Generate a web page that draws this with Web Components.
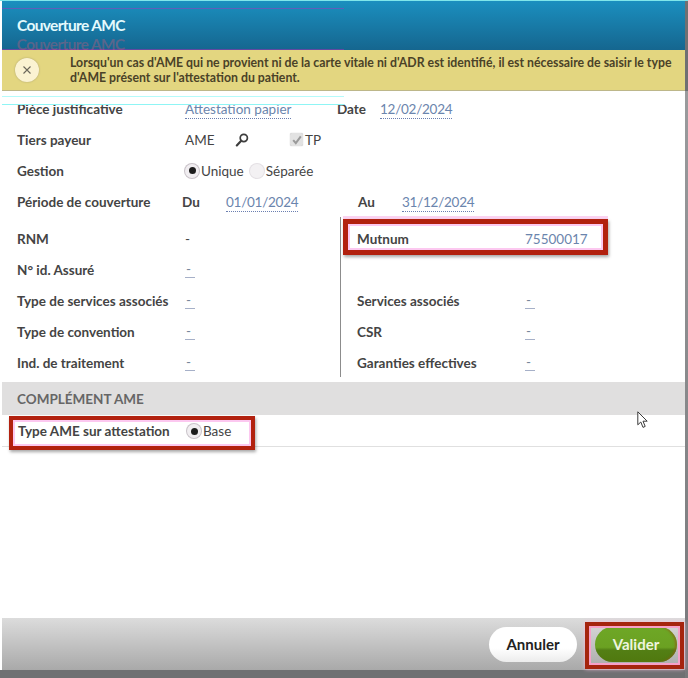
<!DOCTYPE html>
<html lang="fr">
<head>
<meta charset="utf-8">
<title>Couverture AMC</title>
<style>
  html, body { margin: 0; padding: 0; background: #fff; }
  body { font-family: Lato, "Liberation Sans", sans-serif; color: #3c3c3c; }
</style>
</head>
<body>
<cov-dialog>
  <cov-header slot="header">Couverture AMC</cov-header>
  <cov-notice slot="notice">Lorsqu'un cas d'AME qui ne provient ni de la carte vitale ni d'ADR est identifié, il est nécessaire de saisir le type d'AME présent sur l'attestation du patient.</cov-notice>

  <cov-row label="Pièce justificative">
    <cov-link style="width:152px">Attestation papier</cov-link>
    <cov-label style="width:43px">Date</cov-label>
    <cov-link date>12/02/2024</cov-link>
  </cov-row>
  <cov-row label="Tiers payeur">
    <cov-value style="width:50px">AME</cov-value>
    <cov-icon style="width:55px"></cov-icon>
    <cov-check>TP</cov-check>
  </cov-row>
  <cov-row label="Gestion">
    <cov-radio checked>Unique</cov-radio>
    <cov-radio>Séparée</cov-radio>
  </cov-row>
  <cov-row label="Période de couverture" tight>
    <cov-label style="width:44px">Du</cov-label>
    <cov-link date style="width:132px">01/01/2024</cov-link>
    <cov-label style="width:44px">Au</cov-label>
    <cov-link date>31/12/2024</cov-link>
  </cov-row>

  <cov-columns>
    <div slot="left">
      <cov-row label="RNM"><cov-value>-</cov-value></cov-row>
      <cov-row label="N° id. Assuré"><cov-link dash>-</cov-link></cov-row>
      <cov-row label="Type de services associés"><cov-link dash>-</cov-link></cov-row>
      <cov-row label="Type de convention"><cov-link dash>-</cov-link></cov-row>
      <cov-row label="Ind. de traitement"><cov-link dash>-</cov-link></cov-row>
    </div>
    <div slot="right">
      <cov-row label="Mutnum" side marked><cov-link>75500017</cov-link></cov-row>
      <cov-row side></cov-row>
      <cov-row label="Services associés" side><cov-link dash>-</cov-link></cov-row>
      <cov-row label="CSR" side><cov-link dash>-</cov-link></cov-row>
      <cov-row label="Garanties effectives" side><cov-link dash>-</cov-link></cov-row>
    </div>
  </cov-columns>

  <cov-section>COMPLÉMENT AME</cov-section>
  <cov-complement><cov-radio checked>Base</cov-radio></cov-complement>

  <cov-footer slot="footer"></cov-footer>
  <cov-ghost slot="overlay"></cov-ghost>
</cov-dialog>

<script>
const fontStack = 'Lato, "Liberation Sans", sans-serif';

// small helper so every element gets its shadow root the same way
class CovBase extends HTMLElement {
  constructor() {
    super();
    this.attachShadow({mode: 'open'});
    this.shadowRoot.innerHTML = this.render();
  }
  render() { return '<slot></slot>'; }
}

class CovDialog extends CovBase {
  render() {
    return `
      <style>
        :host {
          display: flex;
          flex-direction: column;
          box-sizing: border-box;
          width: 688px;
          height: 678px;
          padding: 1px 3px 8px 2px;
          background: linear-gradient(#fff, #fff) 0 0 / 685px 670px no-repeat,
                      #6f7072;
          position: relative;
          overflow: hidden;
          font-family: ${fontStack};
        }
        .content { flex: 1; display: flex; flex-direction: column; min-height: 0; }
        .edge {
          position: absolute; top: 0; left: 0; right: 0; height: 1px; background: #7fe6ea;
        }
        .side {
          position: absolute; top: 91px; right: 0; bottom: 0; width: 3px;
          background: linear-gradient(#9a9b9d, #77787a);
        }
        .cursor { position: absolute; left: 637px; top: 411px; }
      </style>
      <div class="edge"></div>
      <div class="side"></div>
      <slot name="header"></slot>
      <slot name="notice"></slot>
      <div class="content"><slot></slot></div>
      <slot name="footer"></slot>
      <slot name="overlay"></slot>
      <svg class="cursor" width="12" height="18" viewBox="0 0 12 18">
        <path d="M.8.8v13l3-2.8 2.2 5.4 2.2-1-2.2-5.2h4.2z" fill="#fff" stroke="#3a3a3a" stroke-width="1"/>
      </svg>
    `;
  }
}

class CovHeader extends CovBase {
  render() {
    return `
      <style>
        :host {
          display: flex;
          align-items: center;
          height: 49px;
          padding: 0 15px 2px 15px;
          box-sizing: border-box;
          background: linear-gradient(#1b8fbf, #15668f);
          color: #e4fafd;
          font-size: 15.5px;
          line-height: 18px;
          font-weight: 700;
          letter-spacing: -0.65px;
        }
      </style>
      <slot></slot>
    `;
  }
}

class CovNotice extends CovBase {
  render() {
    return `
      <style>
        :host {
          display: flex;
          align-items: center;
          height: 41px;
          box-sizing: border-box;
          background: #e3d680;
          border-bottom: 1px solid #bdb78a;
          margin-bottom: 2px;
          color: #4a4228;
          font-size: 12.3px;
          font-weight: 700;
          line-height: 15px;
        }
        .close {
          flex: none;
          width: 24px; height: 24px;
          margin: 0 31px 0 13px;
          border-radius: 50%;
          background: #fbf3d2;
          box-shadow: 0 0 2px #a89f6c;
          display: flex; align-items: center; justify-content: center;
        }
        .text { flex: 1; padding-right: 8px; }
      </style>
      <div class="close">
        <svg width="10" height="10" viewBox="0 0 10 10">
          <path d="M1.5 1.5l7 7M8.5 1.5l-7 7" stroke="#6b675a" stroke-width="1.1" fill="none"/>
        </svg>
      </div>
      <div class="text"><slot></slot></div>
    `;
  }
}

class CovRow extends CovBase {
  render() {
    const label = this.getAttribute('label') || '';
    const side = this.hasAttribute('side');
    return `
      <style>
        :host {
          display: flex;
          align-items: center;
          box-sizing: border-box;
          height: 31px;
          padding-left: ${side ? 16 : 15}px;
          font-size: 13.5px;
          color: #444;
          position: relative;
        }
        .label { flex: none; width: 168px; font-weight: 700; white-space: nowrap; }
        :host([tight]) .label { width: 165px; }
        .values { display: flex; align-items: center; white-space: nowrap; }
        .mark {
          position: absolute; left: 2px; top: -4px; width: 265px; height: 36px;
          box-sizing: border-box;
          border: 5px solid #b2210f;
          box-shadow: inset 0 0 0 2px #fcc8f0, 1px 2px 3px rgba(0,0,0,.35), 0 -3px 0 #fbd3f1;
          pointer-events: none;
        }
      </style>
      <div class="label">${label}</div>
      <div class="values"><slot></slot></div>
      ${this.hasAttribute('marked') ? '<div class="mark"></div>' : ''}
    `;
  }
}

class CovLabel extends CovBase {
  render() {
    return `<style>:host{display:block;font-size:13.5px;font-weight:700;color:#444}</style><slot></slot>`;
  }
}

class CovValue extends CovBase {
  render() {
    return `<style>:host{display:block;font-size:13.5px;color:#444}</style><slot></slot>`;
  }
}

class CovLink extends CovBase {
  render() {
    return `
      <style>
        :host { display: block; font-size: 13.5px; color: #6b85ad; }
        :host([date]) { letter-spacing: -0.25px; }
        span { border-bottom: 1px dotted #6b7fb0; padding-bottom: 1px; }
        :host([dash]) span { display: inline-block; padding: 0 4px 0 1px; line-height: 16px; color: #77869b; border-bottom-style: solid; border-bottom-color: #a6b0c8; }
      </style>
      <span><slot></slot></span>
    `;
  }
}

class CovIcon extends CovBase {
  render() {
    return `
      <style>:host{display:flex;align-items:center}</style>
      <svg width="14" height="14" viewBox="0 0 14 14">
        <circle cx="8.8" cy="5" r="3.6" fill="none" stroke="#3e3e3e" stroke-width="1.7"/>
        <path d="M6.2 7.8L1.8 12.4" stroke="#3e3e3e" stroke-width="2.2" stroke-linecap="round"/>
      </svg>
    `;
  }
}

class CovCheck extends CovBase {
  render() {
    return `
      <style>
        :host { display: flex; align-items: center; gap: 2px; font-size: 13.5px; color: #444; }
        .box {
          width: 13px; height: 13px; border-radius: 2px;
          background: #e2e2e2; box-shadow: 0 0 1px #aaa;
          display: flex; align-items: center; justify-content: center;
        }
      </style>
      <div class="box">
        <svg width="12" height="12" viewBox="0 0 12 12">
          <path d="M2.2 6.2l2.6 3L9.8 2.4" stroke="#9a9a9a" stroke-width="2" fill="none"/>
        </svg>
      </div>
      <slot></slot>
    `;
  }
}

class CovRadio extends CovBase {
  render() {
    const on = this.hasAttribute('checked');
    return `
      <style>
        :host { display: flex; align-items: center; gap: 2px; font-size: 13.5px; color: #444; margin-right: 6px; }
        .dot {
          width: 14px; height: 14px; border-radius: 50%;
          background: ${on ? '#f1eef1' : '#f3f1f3'};
          box-shadow: 0 0 0 1px ${on ? '#c9c3c9' : '#e4e0e4'};
          display: flex; align-items: center; justify-content: center;
        }
        .dot i { width: 7px; height: 7px; border-radius: 50%; background: #1d1d1d; display: ${on ? 'block' : 'none'}; }
      </style>
      <div class="dot"><i></i></div>
      <slot></slot>
    `;
  }
}

class CovColumns extends CovBase {
  render() {
    return `
      <style>
        :host {
          display: grid;
          grid-template-columns: 338px 1fr;
          height: 155px;
          margin-top: 6px;
        }
        .right { border-left: 1px solid #8c8c8c; height: 154px; margin-top: -6px; padding-top: 6px; }
      </style>
      <div><slot name="left"></slot></div>
      <div class="right"><slot name="right"></slot></div>
    `;
  }
}

class CovSection extends CovBase {
  render() {
    return `
      <style>
        :host {
          display: flex;
          align-items: center;
          height: 33px;
          margin-top: 4px;
          padding-left: 15px;
          background: #e0dfdf;
          color: #666;
          font-size: 13.5px;
          font-weight: 700;
        }
      </style>
      <slot></slot>
    `;
  }
}

class CovComplement extends CovBase {
  render() {
    return `
      <style>
        :host {
          display: flex;
          align-items: center;
          position: relative;
          height: 32px;
          padding: 1px 0 0 16px;
          box-sizing: border-box;
          border-bottom: 1px solid #e0e0e0;
          font-size: 13.5px;
          color: #444;
        }
        .label { width: 169px; font-weight: 700; }
        .mark {
          position: absolute; left: 7px; top: 1px; width: 246px; height: 34px;
          box-sizing: border-box;
          border: 4px solid #b2210f;
          box-shadow: inset 0 0 0 2px #fcc8f0, 1px 2px 3px rgba(0,0,0,.35);
        }
      </style>
      <div class="label">Type AME sur attestation</div>
      <slot></slot>
      <div class="mark"></div>
    `;
  }
}

class CovFooter extends CovBase {
  render() {
    return `
      <style>
        :host {
          display: flex;
          align-items: center;
          justify-content: flex-end;
          gap: 18px;
          height: 52px;
          padding-right: 8px;
          background: linear-gradient(#dcdcdc, #a9a9a9);
          position: relative;
        }
        button {
          height: 35px;
          border: 0;
          border-radius: 18px;
          font: 700 15px ${fontStack};
        }
        .cancel { width: 88px; background: linear-gradient(#fff 60%, #ececec); color: #222; }
        .ok {
          width: 82px;
          background: linear-gradient(#6ea726 0, #6ba122 58%, #537f15 66%, #50790f);
          box-shadow: inset -2px 0 2px rgba(140,90,20,.55);
          color: #eef5df;
        }
        .mark {
          position: absolute; right: 1px; top: 4px; width: 99px; height: 47px;
          box-sizing: border-box;
          border: 4px solid #a5240e;
          box-shadow: inset 0 0 0 2px #f7a0c8, 0 0 4px #f7bcdc;
        }
      </style>
      <button class="cancel">Annuler</button>
      <button class="ok">Valider</button>
      <div class="mark"></div>
    `;
  }
}

// leftovers of the capture: stray lines and the doubled title, over the rest of the page
class CovGhost extends CovBase {
  render() {
    return `
      <style>
        :host {
          position: absolute; left: 0; top: 0; width: 344px; height: 110px;
          overflow: hidden; pointer-events: none;
        }
        .line { position: absolute; left: 2px; right: 0; height: 1px; }
        .red {
          position: absolute; left: 17px; top: 37px; white-space: nowrap;
          font-size: 15.5px; line-height: 15px; font-weight: 700; letter-spacing: -.65px;
          color: rgba(245,90,120,.3); filter: blur(.4px);
        }
      </style>
      <div class="line" style="top:8px;background:rgba(150,60,190,.55)"></div>
      <div class="line" style="top:49px;background:rgba(130,60,170,.7)"></div>
      <div class="line" style="top:96px;background:#b5fbfb"></div>
      <div class="line" style="top:104px;background:#8ff5f5"></div>
      <div class="red">Couverture AMC</div>
    `;
  }
}

customElements.define('cov-dialog', CovDialog);
customElements.define('cov-header', CovHeader);
customElements.define('cov-notice', CovNotice);
customElements.define('cov-row', CovRow);
customElements.define('cov-label', CovLabel);
customElements.define('cov-value', CovValue);
customElements.define('cov-link', CovLink);
customElements.define('cov-icon', CovIcon);
customElements.define('cov-check', CovCheck);
customElements.define('cov-radio', CovRadio);
customElements.define('cov-columns', CovColumns);
customElements.define('cov-section', CovSection);
customElements.define('cov-complement', CovComplement);
customElements.define('cov-footer', CovFooter);
customElements.define('cov-ghost', CovGhost);
</script>
</body>
</html>
